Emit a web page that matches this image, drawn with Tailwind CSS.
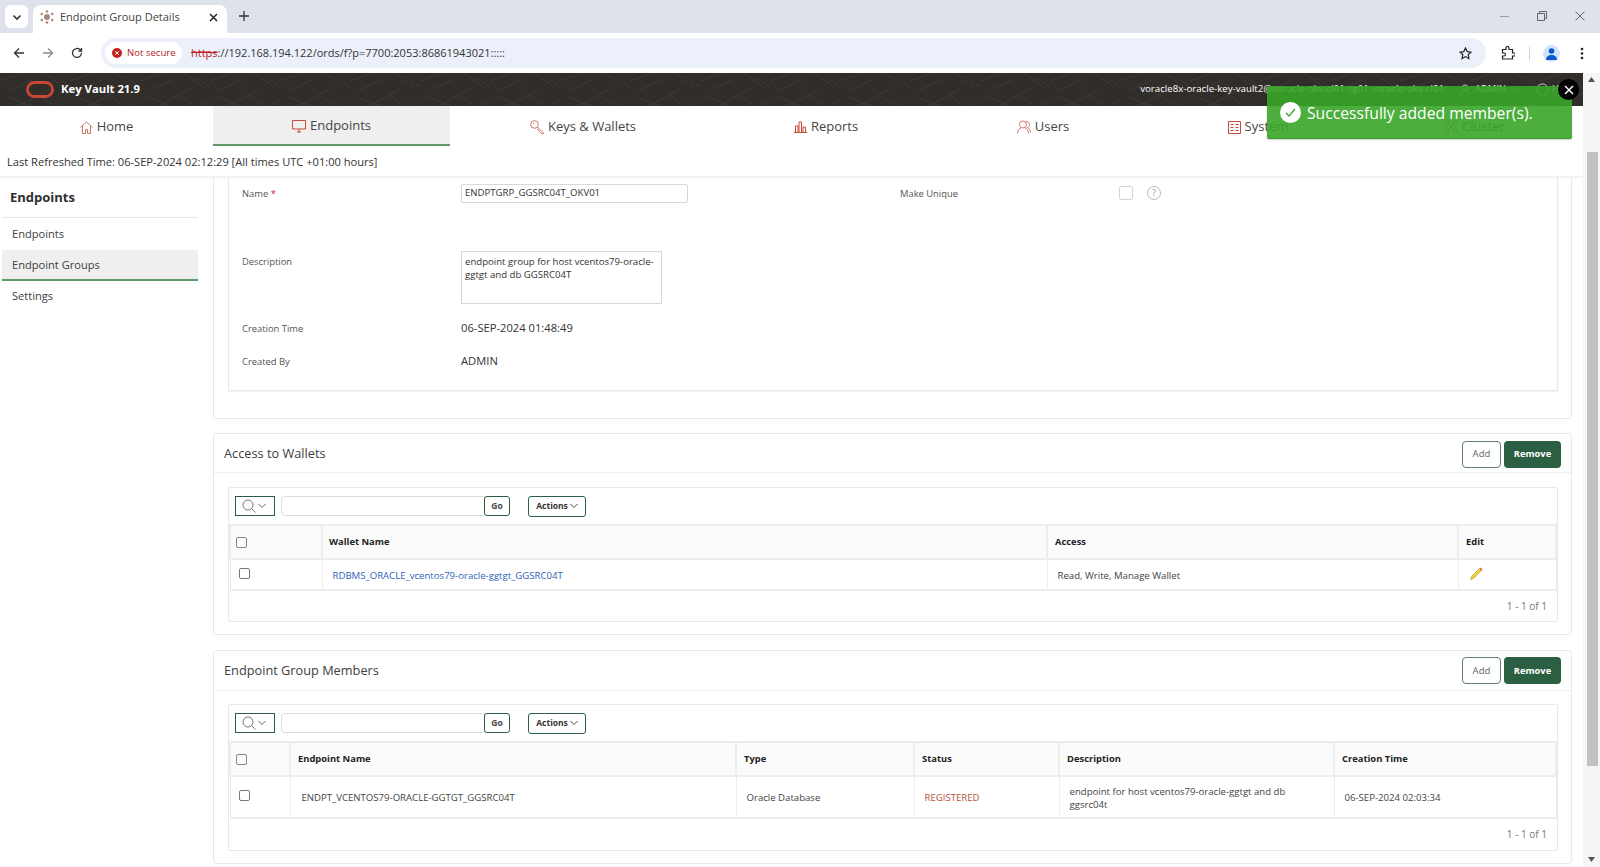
<!DOCTYPE html>
<html lang="en">
<head>
  <meta charset="UTF-8">
  <title>Endpoint Group Details</title>
  <script src="https://cdn.jsdelivr.net/npm/@tailwindcss/browser@4"></script>
</head>
<body class="relative w-[1600px] h-[867px] overflow-hidden bg-white font-['Open_Sans','Noto_Sans',sans-serif] text-[#404040]">

  <!-- Browser tab strip -->
  <div class="h-[33px] bg-[#dee3eb] flex items-start relative">
    <div class="mt-[5px] ml-[5px] w-[23px] h-[23px] rounded-md bg-white flex items-center justify-center">
      <svg class="w-[10px] h-[10px]" viewBox="0 0 10 10" fill="none" stroke="#333" stroke-width="1.6"><path d="M1.5 3.5 5 7l3.5-3.5"/></svg>
    </div>
    <div class="mt-[5px] ml-[5px] w-[194px] h-[28px] bg-white rounded-t-lg flex items-center pl-[7px] pr-[9px] pb-[4px]">
      <svg class="w-[14px] h-[14px] shrink-0" viewBox="0 0 14 14" fill="#a98a7a"><circle cx="7" cy="7" r="3"/><circle cx="7" cy="1.5" r="1.3"/><circle cx="7" cy="12.5" r="1.3"/><circle cx="1.8" cy="4" r="1.3"/><circle cx="12.2" cy="4" r="1.3"/><circle cx="1.8" cy="10" r="1.3"/><circle cx="12.2" cy="10" r="1.3"/></svg>
      <span class="ml-[6px] text-[11px] text-[#444] flex-1">Endpoint Group Details</span>
      <svg class="w-[9px] h-[9px]" viewBox="0 0 9 9" stroke="#222" stroke-width="1.5"><path d="M1 1l7 7M8 1 1 8"/></svg>
    </div>
    <svg class="mt-[11px] ml-[12px] w-[10px] h-[10px]" viewBox="0 0 10 10" stroke="#333" stroke-width="1.3"><path d="M5 0v10M0 5h10"/></svg>
    <div class="ml-auto flex items-center gap-[28px] mt-[11px] mr-[15px]">
      <svg class="w-[9px] h-[9px]" viewBox="0 0 9 9" stroke="#9a9ea6"><path d="M0 4.5h9"/></svg>
      <svg class="w-[10px] h-[10px]" viewBox="0 0 10 10" fill="none" stroke="#666"><path d="M.5 2.5h7v7h-7zM2.5 2.5v-2h7v7h-2"/></svg>
      <svg class="w-[10px] h-[10px]" viewBox="0 0 10 10" stroke="#666"><path d="M.5.5l9 9M9.5.5l-9 9"/></svg>
    </div>
  </div>

  <!-- Browser toolbar -->
  <div class="h-[40px] bg-white rounded-t-lg flex items-center">
    <svg class="ml-[13px] w-[12px] h-[12px]" viewBox="0 0 12 12" fill="none" stroke="#333" stroke-width="1.3"><path d="M11 6H1.5M6 1.5 1.5 6 6 10.5"/></svg>
    <svg class="ml-[17px] w-[12px] h-[12px]" viewBox="0 0 12 12" fill="none" stroke="#8a8a8a" stroke-width="1.3"><path d="M1 6h9.5M6 1.5 10.5 6 6 10.5"/></svg>
    <svg class="ml-[17px] w-[12px] h-[12px]" viewBox="0 0 12 12" fill="none" stroke="#333" stroke-width="1.3"><path d="M10.5 6A4.5 4.5 0 1 1 9 2.6L10.5 4M10.5 1v3h-3"/></svg>
    <div class="ml-[18px] w-[1385px] h-[30px] bg-[#ebf0fa] rounded-full flex items-center pl-[4px] pr-[14px]">
      <div class="h-[22px] w-[77px] rounded-full bg-white flex items-center pl-[7px]">
        <svg class="w-[10px] h-[10px] shrink-0" viewBox="0 0 10 10"><circle cx="5" cy="5" r="5" fill="#c5221f"/><path d="M3.2 3.2l3.6 3.6M6.8 3.2 3.2 6.8" stroke="#fff"/></svg>
        <span class="ml-[5px] text-[9.6px] text-[#b3261e] whitespace-nowrap">Not secure</span>
      </div>
      <span class="ml-[9px] text-[11px] text-[#333]"><span class="line-through text-[#c5221f]">https</span>://192.168.194.122/ords/f?p=7700:2053:86861943021:::::</span>
      <svg class="ml-auto w-[13px] h-[13px]" viewBox="0 0 13 13" fill="none" stroke="#222" stroke-width="1.2"><path d="M6.5 1l1.7 3.6 3.8.5-2.8 2.6.7 3.8-3.4-1.9-3.4 1.9.7-3.8L1 5.1l3.8-.5z"/></svg>
    </div>
    <svg class="ml-[15px] w-[14px] h-[14px]" viewBox="0 0 14 14" fill="none" stroke="#222" stroke-width="1.2"><path d="M1.5 3.5H5V2a1.5 1.5 0 0 1 3 0v1.5h3.5V7H13a1.5 1.5 0 0 1 0 3h-1.5v3h-10V10H3a1.5 1.5 0 0 0 0-3H1.5z"/></svg>
    <div class="ml-[14px] w-px h-[13px] bg-[#c8d4e8]"></div>
    <div class="ml-[13px] w-[17px] h-[17px] rounded-full bg-[#d3e3fd] overflow-hidden flex items-center justify-center">
      <svg class="w-[13px] h-[13px]" viewBox="0 0 13 13" fill="#0b57d0"><circle cx="6.5" cy="4" r="2.8"/><path d="M1 13c0-3.5 2.5-5 5.5-5s5.5 1.5 5.5 5z"/></svg>
    </div>
    <svg class="ml-[20px] w-[4px] h-[13px]" viewBox="0 0 4 13" fill="#222"><circle cx="2" cy="2" r="1.3"/><circle cx="2" cy="6.5" r="1.3"/><circle cx="2" cy="11" r="1.3"/></svg>
  </div>

  <div class="flex h-[794px]">
    <div class="w-[1583px] flex flex-col">

      <!-- App header -->
      <div class="relative h-[33px] bg-[#312d2a] flex items-center text-white overflow-hidden">
        <svg class="absolute inset-0 w-full h-full" aria-hidden="true">
          <defs><pattern id="hdr" width="70" height="33" patternUnits="userSpaceOnUse"><path d="M0 8 22 0M8 18 34 6M18 33 50 16M44 0l20 14M56 4l14 10M60 33 70 26M30 33 8 24M54 33 40 22" stroke="#3e3935" fill="none"/></pattern></defs>
          <rect width="100%" height="100%" fill="url(#hdr)"/>
        </svg>
        <svg class="relative ml-[26px] w-[28px] h-[17px]" viewBox="0 0 28 17" fill="none"><rect x="1.5" y="1.5" width="25" height="14" rx="7" stroke="#c74634" stroke-width="2.8"/></svg>
        <span class="relative ml-[7px] text-[11.3px] font-bold">Key Vault 21.9</span>
        <span class="relative ml-auto text-[9.7px] whitespace-nowrap">voracle8x-oracle-key-vault2@voracle-okv-cl01-sg01.voracle-okv-cl01</span>
        <svg class="relative ml-[16px] w-[10px] h-[13px]" viewBox="0 0 12 13" fill="none" stroke="#ddd"><circle cx="6" cy="4" r="3"/><path d="M1 13c0-3 2-5 5-5s5 2 5 5"/></svg>
        <span class="relative ml-[5px] text-[9.4px] w-[31px]">ADMIN</span>
        <svg class="relative ml-[5px] w-[8px] h-[6px]" viewBox="0 0 8 6" fill="none" stroke="#ddd"><path d="M.5 1 4 4.5 7.5 1"/></svg>
        <svg class="relative ml-[17px] w-[13px] h-[13px]" viewBox="0 0 14 14" fill="none" stroke="#ddd"><circle cx="7" cy="7" r="6"/></svg>
        <span class="relative ml-[3px] mr-[7px] text-[9.4px] w-[24px]">Help</span>
      </div>

      <!-- Main nav -->
      <nav class="h-[40px] grid grid-cols-[213px_237px_266px_220px_214px_216px_217px] text-[13px] text-[#454545]">
        <div class="flex items-center justify-center gap-[4px] pt-[2px]">
          <svg class="w-[13px] h-[13px]" viewBox="0 0 13 13" fill="none" stroke="#d0776d"><path d="M.5 6.5 6.5 1l6 5.5M2.5 5v7.5h3V8.5h2v4h3V5"/></svg>Home
        </div>
        <div class="flex items-center justify-center gap-[4px] pt-[2px] bg-[#efefef] border-b-2 border-[#5f9a68]">
          <svg class="w-[14px] h-[13px]" viewBox="0 0 14 13" fill="none" stroke="#c9473b"><path d="M.5.5h13V9H.5zM5 12h4M7 9v3"/></svg>Endpoints
        </div>
        <div class="flex items-center justify-center gap-[4px] pt-[2px]">
          <svg class="w-[14px] h-[14px]" viewBox="0 0 14 14" fill="none" stroke="#d0776d"><circle cx="4.5" cy="4.5" r="3.8"/><path d="M7.5 7 13.5 13v.5h-2l-1-1-1-1-1-1.500-1.500-1M3 3.5h1"/></svg>Keys &amp; Wallets
        </div>
        <div class="flex items-center justify-center gap-[4px] pt-[2px]">
          <svg class="w-[13px] h-[12px]" viewBox="0 0 13 12" fill="none" stroke="#c9473b"><path d="M0 11.5h13M1.5 11V5H4v6M5 11V1h2.500v10M9 11V6h2.500v5"/></svg>Reports
        </div>
        <div class="flex items-center justify-center gap-[4px] pt-[2px]">
          <svg class="w-[14px] h-[14px]" viewBox="0 0 14 14" fill="none" stroke="#d0776d"><circle cx="6" cy="4.5" r="3.5"/><path d="M.5 13.5c0-3 1.500-5 3.500-5.500M8 8c2 .5 3.500 2.500 3.500 5.500M9 1.200c2 .2 3.500 1.500 3.500 3.300 0 1.500-.8 2.500-2 3 1.800.8 3 2.500 3 5"/></svg>Users
        </div>
        <div class="flex items-center justify-center gap-[4px] pt-[2px]">
          <svg class="w-[13px] h-[13px]" viewBox="0 0 13 13" fill="none" stroke="#c9473b"><path d="M.5.5h12v12H.5zM2.5 3.5h3M7.5 3.5h3M2.5 6.5h3M7.5 6.500h3M2.5 9.5h3M7.5 9.5h3"/></svg>System
        </div>
        <div class="flex items-center justify-center gap-[4px] pt-[2px]">
          <svg class="w-[14px] h-[14px]" viewBox="0 0 14 14" fill="none" stroke="#d0776d"><circle cx="3" cy="3" r="2"/><circle cx="11" cy="3" r="2"/><circle cx="3" cy="11" r="2"/><circle cx="11" cy="11" r="2"/><path d="M4.5 4.5l5 5M9.5 4.5l-5 5"/></svg>Cluster
        </div>
      </nav>

      <!-- Refresh line -->
      <div class="h-[31px] flex items-center pl-[7px] pt-[2px] text-[11.1px] text-[#333] border-b border-[#f0f0f0] shadow-[0_1px_2px_rgba(0,0,0,0.06)]">Last Refreshed Time: 06-SEP-2024 02:12:29 [All times UTC +01:00 hours]</div>

      <div class="flex flex-1 overflow-hidden">
        <!-- Sidebar -->
        <aside class="w-[213px] shrink-0 pl-[2px] pr-[15px] text-[11.1px]">
          <div class="h-[41px] pl-[8px] pt-[2px] flex items-center text-[13px] font-bold text-[#2f2f2f] border-b border-[#e6e6e6]">Endpoints</div>
          <div class="h-[32px] pl-[10px] pt-[1px] flex items-center">Endpoints</div>
          <div class="h-[31px] pl-[10px] pt-[2px] flex items-center bg-[#efefef] border-b-2 border-[#5f9a68]">Endpoint Groups</div>
          <div class="h-[30px] pl-[10px] flex items-center">Settings</div>
        </aside>

        <main class="w-[1359px] shrink-0">
          <!-- Details card -->
          <section class="h-[242px] border border-t-0 border-[#e8e8e8] rounded-b pl-[14px] pr-[13px]">
            <div class="h-[214px] border border-t-0 border-[#e8e8e8] text-[9.4px] text-[#555] shadow-[0_1px_1px_rgba(0,0,0,0.05)]">
              <div class="h-[33px] flex items-center">
                <span class="ml-[13px] w-[219px] pt-[2px]">Name <span class="text-[#c5221f]">*</span></span>
                <div class="w-[227px] h-[19px] border border-[#d8d8d8] rounded-[2px] flex items-center pl-[3px] text-[9.6px] text-[#333]">ENDPTGRP_GGSRC04T_OKV01</div>
                <span class="ml-[212px] w-[219px] pt-[2px]">Make Unique</span>
                <span class="-mt-[2px] w-[14px] h-[14px] border border-[#d4d4d4] rounded-[2px]"></span>
                <span class="-mt-[2px] ml-[14px] w-[14px] h-[14px] border border-[#b8b8b8] rounded-full flex items-center justify-center text-[9px] text-[#999]">?</span>
              </div>
              <div class="h-[41px]"></div>
              <div class="h-[53px] flex items-start">
                <span class="ml-[13px] w-[219px] pt-[4px]">Description</span>
                <div class="w-[201px] h-[53px] border border-[#d8d8d8] px-[3px] py-[3px] text-[9.6px] leading-[13px] text-[#333]">endpoint group for host vcentos79-oracle-ggtgt and db GGSRC04T</div>
              </div>
              <div class="h-[24px] mt-[12px] flex items-center">
                <span class="ml-[13px] w-[219px] pt-[2px]">Creation Time</span>
                <span class="text-[11.2px] text-[#333]">06-SEP-2024 01:48:49</span>
              </div>
              <div class="h-[24px] mt-[9px] flex items-center">
                <span class="ml-[13px] w-[219px] pt-[2px]">Created By</span>
                <span class="text-[11.2px] text-[#333]">ADMIN</span>
              </div>
            </div>
          </section>

          <!-- Access to Wallets -->
          <section class="mt-[14px] h-[202px] border border-[#e8e8e8] rounded">
            <div class="h-[39px] pt-[2px] border-b border-[#efefef] flex items-center pl-[10px] pr-[10px] text-[12.75px] text-[#404040]">
              <span class="flex-1">Access to Wallets</span>
              <button class="w-[39px] h-[27px] border border-[#5e8069] rounded text-[9.6px] text-[#666]">Add</button>
              <button class="ml-[3px] w-[57px] h-[27px] bg-[#2a6041] rounded text-[9.3px] font-bold text-white">Remove</button>
            </div>
            <div class="ml-[14px] mr-[13px] mt-[14px] h-[135px] border border-[#e8e8e8] rounded-[2px]">
              <div class="h-[36px] flex items-center pl-[6px]">
                <div class="w-[40px] h-[20px] border border-[#2a6041] flex items-center pl-[6px] gap-[2px]">
                  <svg class="w-[14px] h-[14px]" viewBox="0 0 14 14" fill="none" stroke="#777"><circle cx="6" cy="6" r="5"/><path d="M9.5 9.5 13.5 13.5"/></svg>
                  <svg class="w-[8px] h-[6px]" viewBox="0 0 8 6" fill="none" stroke="#666"><path d="M.5 1 4 4.5 7.5 1"/></svg>
                </div>
                <div class="ml-[6px] w-[204px] h-[20px] border border-[#ddd] rounded-l"></div>
                <button class="w-[26px] h-[20px] border border-[#2a6041] rounded-[3px] text-[8.5px] font-bold text-[#444] -ml-px">Go</button>
                <button class="ml-[18px] w-[58px] h-[21px] border border-[#2a6041] rounded-[3px] text-[8.5px] font-bold text-[#333] flex items-center justify-center gap-[2px]">Actions
                  <svg class="w-[8px] h-[6px]" viewBox="0 0 8 6" fill="none" stroke="#444"><path d="M.5 1 4 4.5 7.5 1"/></svg>
                </button>
              </div>
              <table class="w-full table-fixed text-[9.6px] text-[#444] border-collapse">
                <thead>
                  <tr class="h-[34px] bg-[#fbfbfb] text-[9.4px] text-[#222] text-left">
                    <th class="w-[92px] border-2 border-[#ededed] pl-[5px]"><span class="block w-[11px] h-[11px] border border-[#888] rounded-[2px]"></span></th>
                    <th class="w-[725px] border-2 border-[#ededed] pl-[6px]">Wallet Name</th>
                    <th class="w-[411px] border-2 border-[#ededed] pl-[7px]">Access</th>
                    <th class="border-2 border-[#ededed] pl-[7px]">Edit</th>
                  </tr>
                </thead>
                <tbody>
                  <tr class="h-[31px] border-b-2 border-[#ededed]">
                    <td class="border border-[#ededed] pl-[8px]"><span class="block w-[11px] h-[11px] border border-[#777] rounded-[2px] -mt-[2px]"></span></td>
                    <td class="border border-[#ededed] pl-[10px] pt-[3px] text-[#2f63b8]">RDBMS_ORACLE_vcentos79-oracle-ggtgt_GGSRC04T</td>
                    <td class="border border-[#ededed] pl-[10px] pt-[3px]">Read, Write, Manage Wallet</td>
                    <td class="border border-[#ededed] pl-[11px]">
                      <svg class="w-[13px] h-[13px] -mt-[2px]" viewBox="0 0 13 13"><path d="M.5 12.5 2 9 9.5 1.5 11.5 3.5 4 11z" fill="#f2d43c" stroke="#a68a1c" stroke-width=".6"/><path d="M9.5 1.5 10.5.5 12.5 2.5 11.5 3.5z" fill="#e5533d"/></svg>
                    </td>
                  </tr>
                </tbody>
              </table>
              <div class="h-[29px] pt-[2px] flex items-center justify-end pr-[10px] text-[10px] text-[#777]">1 - 1 of 1</div>
            </div>
          </section>

          <!-- Endpoint Group Members -->
          <section class="mt-[15px] h-[214px] border border-[#e8e8e8] rounded">
            <div class="h-[40px] border-b border-[#efefef] flex items-center pl-[10px] pr-[10px] text-[12.75px] text-[#404040]">
              <span class="flex-1">Endpoint Group Members</span>
              <button class="w-[39px] h-[27px] pt-[1px] border border-[#5e8069] rounded text-[9.6px] text-[#666]">Add</button>
              <button class="ml-[3px] w-[57px] h-[27px] bg-[#2a6041] rounded text-[9.3px] font-bold text-white">Remove</button>
            </div>
            <div class="ml-[14px] mr-[13px] mt-[13px] h-[147px] border border-[#e8e8e8] rounded-[2px]">
              <div class="h-[36px] flex items-center pl-[6px]">
                <div class="w-[40px] h-[20px] border border-[#2a6041] flex items-center pl-[6px] gap-[2px]">
                  <svg class="w-[14px] h-[14px]" viewBox="0 0 14 14" fill="none" stroke="#777"><circle cx="6" cy="6" r="5"/><path d="M9.5 9.5 13.5 13.5"/></svg>
                  <svg class="w-[8px] h-[6px]" viewBox="0 0 8 6" fill="none" stroke="#666"><path d="M.5 1 4 4.5 7.5 1"/></svg>
                </div>
                <div class="ml-[6px] w-[204px] h-[20px] border border-[#ddd] rounded-l"></div>
                <button class="w-[26px] h-[20px] border border-[#2a6041] rounded-[3px] text-[8.5px] font-bold text-[#444] -ml-px">Go</button>
                <button class="ml-[18px] w-[58px] h-[21px] border border-[#2a6041] rounded-[3px] text-[8.5px] font-bold text-[#333] flex items-center justify-center gap-[2px]">Actions
                  <svg class="w-[8px] h-[6px]" viewBox="0 0 8 6" fill="none" stroke="#444"><path d="M.5 1 4 4.5 7.5 1"/></svg>
                </button>
              </div>
              <table class="w-full table-fixed text-[9.6px] text-[#444] border-collapse">
                <thead>
                  <tr class="h-[34px] bg-[#fbfbfb] text-[9.4px] text-[#222] text-left">
                    <th class="w-[60px] border-2 border-[#ededed] pl-[5px]"><span class="block w-[11px] h-[11px] border border-[#888] rounded-[2px]"></span></th>
                    <th class="w-[446px] border-2 border-[#ededed] pl-[7px]">Endpoint Name</th>
                    <th class="w-[178px] border-2 border-[#ededed] pl-[7px]">Type</th>
                    <th class="w-[145px] border-2 border-[#ededed] pl-[7px]">Status</th>
                    <th class="w-[275px] border-2 border-[#ededed] pl-[7px]">Description</th>
                    <th class="border-2 border-[#ededed] pl-[7px]">Creation Time</th>
                  </tr>
                </thead>
                <tbody>
                  <tr class="h-[42px] border-b-2 border-[#ededed]">
                    <td class="border border-[#ededed] pl-[8px]"><span class="block w-[11px] h-[11px] border border-[#777] rounded-[2px] -mt-[3px]"></span></td>
                    <td class="border border-[#ededed] pl-[11px] pt-[2px]">ENDPT_VCENTOS79-ORACLE-GGTGT_GGSRC04T</td>
                    <td class="border border-[#ededed] pl-[10px] pt-[2px]">Oracle Database</td>
                    <td class="border border-[#ededed] pl-[10px] pt-[2px] text-[#b5533c]">REGISTERED</td>
                    <td class="border border-[#ededed] pl-[10px] pr-[8px] pt-[2px] leading-[13px]">endpoint for host vcentos79-oracle-ggtgt and db ggsrc04t</td>
                    <td class="border border-[#ededed] pl-[10px] pt-[2px]">06-SEP-2024 02:03:34</td>
                  </tr>
                </tbody>
              </table>
              <div class="h-[31px] flex items-center justify-end pr-[10px] text-[10px] text-[#777]">1 - 1 of 1</div>
            </div>
          </section>
        </main>
      </div>
    </div>

    <!-- Page scrollbar -->
    <div class="w-[17px] bg-[#f5f5f5] flex flex-col items-center">
      <svg class="mt-[4px] w-[7px] h-[5px]" viewBox="0 0 7 5" fill="#555"><path d="M3.5 0 7 5H0z"/></svg>
      <div class="mt-[70px] w-[11px] h-[614px] ml-[2px] bg-[#c1c1c1]"></div>
      <svg class="mt-auto mb-[5px] w-[7px] h-[5px]" viewBox="0 0 7 5" fill="#555"><path d="M0 0h7L3.5 5z"/></svg>
    </div>
  </div>

  <!-- Success toast -->
  <div class="absolute left-[1267px] top-[86px] w-[305px] h-[53px] bg-[#38a528]/90 border-b border-[#33a024] rounded-[2px] flex items-center pl-[13px] text-white text-[15.7px] shadow-[0_1px_2px_rgba(0,0,0,0.2)]">
    <span class="w-[21px] h-[21px] rounded-full bg-white flex items-center justify-center mr-[6px]">
      <svg class="w-[11px] h-[11px]" viewBox="0 0 11 11" fill="none" stroke="#3fa531" stroke-width="1.3"><path d="M1 6 4 9 10 2"/></svg>
    </span>
    <span class="pt-[3px]">Successfully added member(s).</span>
  </div>
  <div class="absolute left-[1558px] top-[79px] w-[21px] h-[21px] rounded-full bg-black flex items-center justify-center">
    <svg class="w-[10px] h-[10px]" viewBox="0 0 10 10" stroke="#fff" stroke-width="1.5"><path d="M1 1l8 8M9 1 1 9"/></svg>
  </div>

</body>
</html>
